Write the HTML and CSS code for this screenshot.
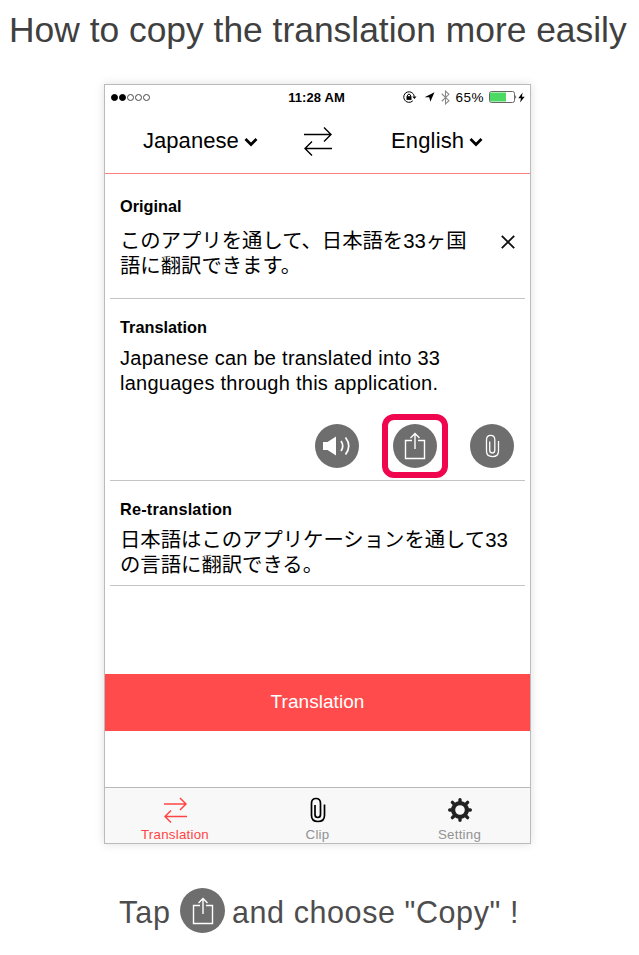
FILE: index.html
```html
<!DOCTYPE html>
<html lang="en">
<head>
<meta charset="utf-8">
<title>How to copy the translation</title>
<link rel="stylesheet" href="styles.css">
</head>
<body>
<svg class="defs" width="0" height="0" aria-hidden="true">
  <symbol id="swap" viewBox="0 0 28 30"><path d="M0 8.500H27M20 1.500L27 8.500L20 15.500M28 22.500H1M8 15.500L1 22.500L8 29.500"/></symbol>
  <symbol id="chevron" viewBox="0 0 14 10"><path d="M1.500 2L7 7.500L12.500 2"/></symbol>
  <symbol id="share" viewBox="0 0 22 28"><path d="M8 8.500H1.500V26.500H20.500V8.500H14M11 17V2M6.500 6L11 1.500L15.500 6"/></symbol>
  <symbol id="clip" viewBox="0 0 16 26"><path d="M5 8V17.500Q5 20.500 7.750 20.500T10.500 17.500V6.500Q10.500 1.500 6 1.500T1.500 6.500V18.500Q1.500 24.500 8 24.500T14.500 18.500V7.500"/></symbol>
</svg>
<h1 class="title">How to copy the translation more easily</h1>
<main class="phone">
  <div class="status">
    <div class="signal"><i class="dot on"></i><i class="dot on"></i><i class="dot"></i><i class="dot"></i><i class="dot"></i></div>
    <div class="clock">11:28 AM</div>
    <div class="indicators">
      <svg width="14" height="12" viewBox="0 0 14 12" fill="none" stroke="#000"><path d="M9.800 9.800A5.300 5.300 0 1 1 11.300 5.500" stroke-width="1"/><path d="M9.300 5.500H13.500L11.400 8Z" fill="#000" stroke="none"/><path d="M4.500 5.500V4Q6 2 7.500 4V5.500"/><path d="M3.500 5.200h5v3.700h-5z" fill="#000" stroke="none"/></svg>
      <svg class="arrow" width="11" height="10" viewBox="0 0 11 10"><path d="M0.500 5.300L10.500 0.300L6.300 9.700L5.300 5.300Z"/></svg>
      <svg class="bt" width="9" height="15" viewBox="0 0 8 14" fill="none" stroke="#888"><path d="M.5 3.500L7.200 10L4 13V1L7.200 4L.5 10.500"/></svg>
      <span class="percent">65%</span>
      <svg class="battery" width="28" height="12" viewBox="0 0 28 12"><rect x=".5" y=".5" width="25" height="11" rx="2" fill="#fff" stroke="#666"/><rect x="1" y="1.500" width="16" height="9" fill="#4cd964"/><path d="M26.500 4v4q1.500-2 0-4Z"/></svg>
      <svg class="bolt" width="7" height="11" viewBox="0 0 7 10"><path d="M4.600 0L.3 5.700H3L2 10L6.700 4.200H3.900Z"/></svg>
    </div>
  </div>
  <nav class="languages">
    <div class="lang from"><span>Japanese</span><svg class="chevron" width="14" height="10"><use href="#chevron"/></svg></div>
    <svg class="swap" width="28" height="30"><use href="#swap"/></svg>
    <div class="lang to"><span>English</span><svg class="chevron" width="14" height="10"><use href="#chevron"/></svg></div>
  </nav>
  <section class="card original">
    <h2>Original</h2>
    <div class="row">
      <p class="ja" lang="ja">このアプリを通して、日本語を33ヶ国<br>語に翻訳できます。</p>
      <svg class="close" width="14" height="14" viewBox="0 0 14 14"><path d="M.8.8L13.200 13.200M13.200.8L.8 13.200"/></svg>
    </div>
  </section>
  <section class="card translation">
    <h2>Translation</h2>
    <p class="en">Japanese can be translated into 33<br>languages through this application.</p>
    <div class="actions">
      <span class="round"><svg width="30" height="22" viewBox="0 0 30 22" fill="none" stroke="#fff" stroke-width="1.700"><path d="M1 7H5.500L14 1.500V20.500L5.500 15H1Z" fill="#fff" stroke="none"/><path d="M19 6Q22.500 11 19 16M23.500 2.500Q30 11 23.500 19.500"/></svg></span>
      <span class="highlight"><span class="round"><svg class="share" width="22" height="28"><use href="#share"/></svg></span></span>
      <span class="round"><svg class="clip" width="15" height="24"><use href="#clip"/></svg></span>
    </div>
  </section>
  <section class="card retranslation">
    <h2>Re-translation</h2>
    <p class="ja" lang="ja">日本語はこのアプリケーションを通して33<br>の言語に翻訳できる。</p>
  </section>
  <div class="submit">Translation</div>
  <footer class="tabs">
    <div class="tab active"><svg class="tab-swap" width="23" height="26" viewBox="0 0 23 26"><path d="M0 7H22M16 1L22 7L16 13M23 19.500H1M7 13.500L1 19.500L7 25.500"/></svg><span>Translation</span></div>
    <div class="tab"><svg class="tab-clip" width="16" height="26"><use href="#clip"/></svg><span>Clip</span></div>
    <div class="tab"><svg class="gear" width="24" height="24" viewBox="-12 -12 24 24"><circle r="6.900" fill="none" stroke="#222" stroke-width="4.200"/><g fill="none" stroke="#222" stroke-width="3.400" stroke-linecap="round"><path d="M0-10.300V-7.500M0 10.300V7.500M-10.300 0H-7.500M10.300 0H7.500"/><path d="M-7.600-7.600L-5.500-5.500M7.600 7.600L5.500 5.500M7.600-7.600L5.500-5.500M-7.600 7.600L-5.500 5.500"/></g></svg><span>Setting</span></div>
  </footer>
</main>
<div class="hint"><span class="tap">Tap</span><span class="round"><svg class="share" width="22" height="28"><use href="#share"/></svg></span><span class="choose">and choose "Copy" !</span></div>
</body>
</html>
```
FILE: styles.css
```css
* { box-sizing: border-box; }
body { margin: 0; width: 639px; height: 955px; overflow: hidden; background: #fff; font-family: "Liberation Sans", "Noto Sans CJK JP", sans-serif; color: #000; }
svg { display: block; flex: none; }
.defs { display: none; }
h1, h2, p { margin: 0; font-weight: 400; white-space: nowrap; }
.title { height: 84px; padding: 10px 0 0 9px; font-size: 35.4px; line-height: 41px; color: #404040; }
.phone { display: flex; flex-direction: column; width: 427px; height: 760px; margin-left: 104px; border: 1px solid #bbb; background: #fff; box-shadow: 0 0 9px rgba(0,0,0,.13); }
.status { display: grid; grid-template-columns: 1fr auto 1fr; align-items: center; height: 24px; padding: 0 5px 0 6px; }
.signal { display: flex; gap: 1px; }
.dot { width: 7px; height: 7px; border: 1px solid #444; border-radius: 50%; }
.dot.on { background: #000; border-color: #000; }
.clock { margin-right: 3px; font-size: 13px; font-weight: 700; letter-spacing: .1px; }
.indicators { display: flex; align-items: center; justify-content: flex-end; }
.arrow { margin-left: 7px; }
.bt { margin-left: 6px; }
.percent { margin: 0 5px 0 5px; font-size: 13.5px; letter-spacing: .5px; }
.bolt { margin-left: 1px; }
.languages { display: flex; flex: none; height: 65px; border-bottom: 1px solid #ff8080; }
.lang { display: flex; align-items: center; gap: 5px; height: 64px; font-size: 22px; letter-spacing: .05px; }
.from { width: 199px; padding-left: 38px; }
.to { padding-left: 59px; letter-spacing: .15px; }
.chevron { fill: none; stroke: #000; stroke-width: 2.700; margin-top: 2px; }
.swap { margin-top: 17px; fill: none; stroke: #000; stroke-width: 1.400; }
.card { margin: 0 5px; padding-left: 10px; border-bottom: 1px solid #c4c4c4; }
.card h2 { font-size: 16.300px; font-weight: 700; line-height: 20px; }
.original { height: 125px; padding-top: 22px; }
.row { display: flex; align-items: flex-start; justify-content: space-between; padding-right: 10px; }
.ja { margin-top: 13px; font-size: 20.350px; line-height: 24.500px; font-weight: 400; }
.en { margin-top: 9px; font-size: 20px; letter-spacing: .26px; line-height: 24.500px; }
.close { margin-top: 19px; fill: none; stroke: #111; stroke-width: 1.900; }
.translation { height: 182px; padding-top: 18px; }
.actions { display: flex; align-items: center; justify-content: flex-end; margin-top: 19px; padding-right: 11px; }
.round { display: flex; flex: none; align-items: center; justify-content: center; width: 45px; height: 45px; border-radius: 50%; background: #6e6e6e; }
.actions .round { width: 44px; height: 44px; }
.highlight { display: flex; align-items: center; justify-content: center; width: 66px; height: 64px; margin: 0 22px 0 23px; border: 6px solid #f0054f; border-radius: 12px; background: #fff; }
.share { fill: none; stroke: #fff; stroke-width: 1.400; }
.clip { fill: none; stroke: #fff; stroke-width: 1.400; }
.retranslation { height: 105px; padding-top: 18px; }
.retranslation h2 { letter-spacing: .2px; }
.retranslation .ja { margin-top: 9px; }
.submit { height: 57px; margin-top: 88px; background: #ff4b4b; color: #fff; text-align: center; font-size: 19px; letter-spacing: .05px; line-height: 56px; }
.tabs { display: grid; grid-template-columns: 140px 145px 139px; margin-top: auto; height: 56px; border-top: 1px solid #b8b8b8; background: #f8f8f8; }
.tab { display: grid; grid-template-rows: 26px 16px; row-gap: 4px; justify-items: center; align-items: center; align-content: start; padding-top: 9px; font-size: 13.300px; line-height: 16px; letter-spacing: .25px; color: #929292; }
.active { color: #ff4545; }
.tab-swap { fill: none; stroke: #ff4545; stroke-width: 1.500; }
.tab-clip { fill: none; stroke: #000; stroke-width: 1.700; }
.hint { display: flex; align-items: center; margin-top: 44px; padding-left: 119px; font-size: 30.500px; color: #4d4d4d; white-space: nowrap; }
.hint span:not(.round) { padding-top: 4px; }
.tap { width: 61px; letter-spacing: .9px; }
.choose { margin-left: 7px; letter-spacing: .58px; }
```
